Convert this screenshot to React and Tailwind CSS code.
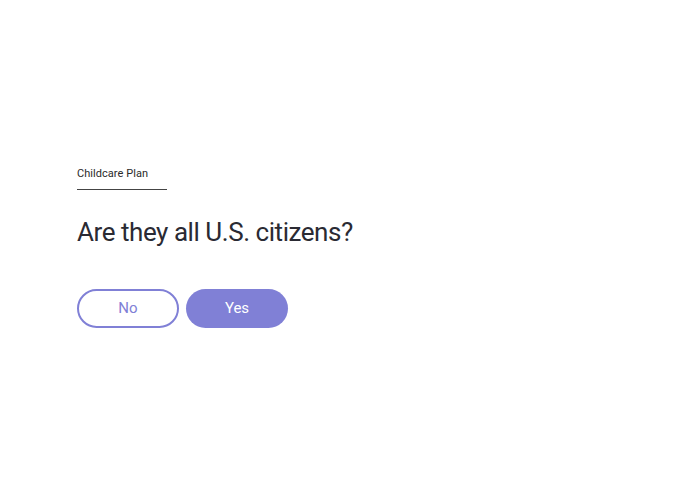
export default function App() {
  return (
    <div className="w-[695px] h-[494px] bg-white" style={{ fontFamily: "Roboto, 'Liberation Sans', sans-serif" }}>
      <div className="pt-[166px] pl-[77px]">
        <div className="w-[90px] border-b border-[#444] pb-[8px] text-[11px] leading-[15px] tracking-[0.05px] text-[#2a2a2a]">Childcare Plan</div>
        <h1 className="mt-[25px] text-[26px] leading-[34px] tracking-[-0.45px] text-[#2a2a33]">Are they all U.S. citizens?</h1>
        <div className="mt-[40px] flex gap-[7px]">
          <button className="w-[102px] h-[39px] rounded-full border-2 border-[#8080d6] bg-white text-[15px] text-[#8080d6]">No</button>
          <button className="w-[102px] h-[39px] rounded-full bg-[#8080d6] text-[15px] text-white">Yes</button>
        </div>
      </div>
    </div>
  );
}
